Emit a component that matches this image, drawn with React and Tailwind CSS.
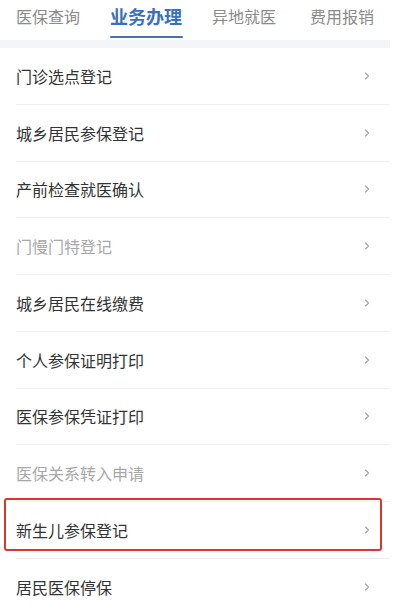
import React from "react";

const tabs = [
  { label: "医保查询", active: false },
  { label: "业务办理", active: true },
  { label: "异地就医", active: false },
  { label: "费用报销", active: false },
];

const rows = [
  { label: "门诊选点登记" },
  { label: "城乡居民参保登记" },
  { label: "产前检查就医确认" },
  { label: "门慢门特登记", disabled: true },
  { label: "城乡居民在线缴费" },
  { label: "个人参保证明打印" },
  { label: "医保参保凭证打印" },
  { label: "医保关系转入申请", disabled: true },
  { label: "新生儿参保登记", marked: true },
  { label: "居民医保停保" },
];

function Chevron() {
  return (
    <svg width="6" height="10" viewBox="0 0 6 10" fill="none">
      <path d="M1.5 2 L4.5 5 L1.5 8" stroke="#a0a0a0" strokeWidth="1.1" strokeLinecap="round" strokeLinejoin="round" />
    </svg>
  );
}

export default function App() {
  return (
    <div
      className="w-[393px] h-[615px] overflow-hidden bg-white relative"
      style={{ fontFamily: '"Noto Sans CJK SC", "Noto Sans", sans-serif' }}
    >
      <div className="h-[40px] flex items-start pl-[16px]">
        {tabs.map((t, i) => (
          <div
            key={t.label}
            className={
              "flex flex-col items-center whitespace-nowrap " +
              (i === 0 ? "w-[64px]" : i === 1 ? "ml-[29px] w-[74px]" : i === 2 ? "ml-[28px] w-[66px]" : "ml-[32px] w-[66px]")
            }
          >
            <div
              className={
                t.active
                  ? "text-[18px] leading-[32px] font-bold text-[#3a6fc0]"
                  : "text-[16px] leading-[32px] text-[#8a8a8a]"
              }
            >
              {t.label}
            </div>
            {t.active && <div className="mt-[4px] h-[2px] w-[73px] bg-[#4a72a8] rounded-full" />}
          </div>
        ))}
      </div>
      <div className="h-[8px] bg-[#f4f5f7] mr-[3px]" />
      <div className="pl-[16px] pr-[3px]">
        {rows.map((r) => (
          <div key={r.label} className="h-[56.75px] flex items-center justify-between border-b border-[#efefef] pr-[20px]">
            <span className={"text-[16px] " + (r.disabled ? "text-[#a8a8a8]" : "text-[#333333]")}>{r.label}</span>
            <Chevron />
          </div>
        ))}
      </div>
      <div className="absolute left-[4px] top-[498px] w-[378px] h-[53px] border-[2px] border-[#d8362e] rounded-[3px] pointer-events-none" />
    </div>
  );
}
